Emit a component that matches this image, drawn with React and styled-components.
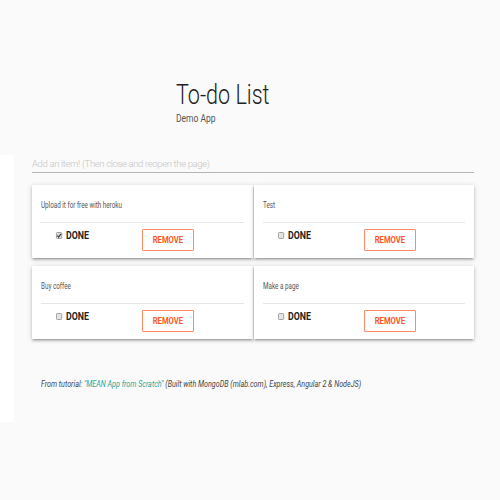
import styled, { createGlobalStyle } from "styled-components";

const GlobalStyle = createGlobalStyle`
  html, body {
    margin: 0;
    padding: 0;
    background: #fafafa;
    font-family: Roboto, "Noto Sans", sans-serif;
  }
`;

const Header = styled.header`
  padding: 79px 0 0 176px;
  height: 76px;
`;

const Title = styled.h1`
  margin: 0;
  font-weight: 300;
  font-size: 28px;
  line-height: 32px;
  color: #222;
  transform: scaleX(0.77);
  transform-origin: left center;
`;

const Subtitle = styled.div`
  font-size: 10px;
  line-height: 15px;
  color: #555;
  transform: scaleX(0.85);
  transform-origin: left center;
`;

const Main = styled.main`
  display: flex;
  height: 267px;
`;

const Side = styled.div`
  width: 14px;
  background: #fff;
`;

const Content = styled.div`
  flex: 1;
  padding: 0 26px 0 18px;
`;

const AddInput = styled.input`
  display: block;
  box-sizing: border-box;
  width: 100%;
  height: 18px;
  padding: 0;
  border: none;
  border-bottom: 1px solid #b5b5b5;
  background: transparent;
  font-family: Roboto, sans-serif;
  font-weight: 300;
  font-size: 9.5px;
  letter-spacing: -0.35px;
  outline: none;

  &::placeholder {
    color: #c4c4c4;
  }
`;

const Grid = styled.div`
  display: grid;
  grid-template-columns: 1fr 1fr;
  column-gap: 1px;
  row-gap: 8px;
  margin-top: 12px;
`;

const Card = styled.div`
  background: #fff;
  padding: 13px 9px 7px;
  box-shadow: 0 2px 2px 0 rgba(0, 0, 0, 0.14), 0 3px 1px -2px rgba(0, 0, 0, 0.12),
    0 1px 5px 0 rgba(0, 0, 0, 0.2);
`;

const ItemTitle = styled.div`
  font-size: 9px;
  line-height: 14px;
  color: #555;
  padding-bottom: 10px;
  border-bottom: 1px solid #e6e6e6;
  white-space: nowrap;

  span {
    display: inline-block;
    transform: scaleX(0.7);
    transform-origin: left center;
  }
`;

const Actions = styled.div`
  display: grid;
  grid-template-columns: 1fr 1fr;
  padding-top: 5px;
`;

const Done = styled.label`
  display: flex;
  align-items: center;
  gap: 3px;
  padding: 0 0 0 15px;
  height: 14px;
  font-weight: 700;
  font-size: 10px;
  color: #222;
  cursor: pointer;

  span {
    display: inline-block;
    transform: scaleX(0.88);
    transform-origin: left center;
  }
`;

const Box = styled.span`
  box-sizing: border-box;
  flex: none;
  width: 7px;
  height: 7px;
  border: 1px solid #9a9a9a;
  border-radius: 1.5px;
  background: ${(p) => (p.$checked ? "#dcdcdc" : "#e4e4e4")};
  position: relative;

  svg {
    position: absolute;
    left: -1px;
    top: -1px;
  }
`;

const RemoveButton = styled.button`
  box-sizing: border-box;
  width: 52px;
  height: 22px;
  padding: 0;
  border: 1px solid #ff8a65;
  border-radius: 1px;
  background: #fff;
  color: #ff5722;
  font-family: Roboto, sans-serif;
  font-weight: 700;
  font-size: 8.5px;
  cursor: pointer;

  span {
    display: inline-block;
    transform: scaleX(0.9);
  }
`;

const Footer = styled.p`
  margin: 39px 0 0 9px;
  font-style: italic;
  font-size: 9.3px;
  line-height: 12px;
  color: #444;
  white-space: nowrap;
  transform: scaleX(0.77);
  transform-origin: left center;

  a {
    color: #26a69a;
    text-decoration: none;
  }
`;

const items = [
  { text: "Upload it for free with heroku", done: true },
  { text: "Test", done: false },
  { text: "Buy coffee", done: false },
  { text: "Make a page", done: false },
];

function Check({ checked }) {
  return (
    <Box $checked={checked}>
      {checked && (
        <svg width="7" height="7" viewBox="0 0 10 10">
          <path d="M2.2 5.2 L4.3 7.3 L8 2.8" fill="none" stroke="#333" strokeWidth="1.8" />
        </svg>
      )}
    </Box>
  );
}

export default function App() {
  return (
    <>
      <GlobalStyle />
      <Header>
        <Title>To-do List</Title>
        <Subtitle>Demo App</Subtitle>
      </Header>
      <Main>
        <Side />
        <Content>
          <AddInput placeholder="Add an item! (Then close and reopen the page)" />
          <Grid>
            {items.map((item) => (
              <Card key={item.text}>
                <ItemTitle>
                  <span>{item.text}</span>
                </ItemTitle>
                <Actions>
                  <Done>
                    <Check checked={item.done} />
                    <span>DONE</span>
                  </Done>
                  <div>
                    <RemoveButton>
                      <span>REMOVE</span>
                    </RemoveButton>
                  </div>
                </Actions>
              </Card>
            ))}
          </Grid>
          <Footer>
            From tutorial: <a href="#">"MEAN App from Scratch"</a> (Built with MongoDB
            (mlab.com), Express, Angular 2 &amp; NodeJS)
          </Footer>
        </Content>
      </Main>
    </>
  );
}
